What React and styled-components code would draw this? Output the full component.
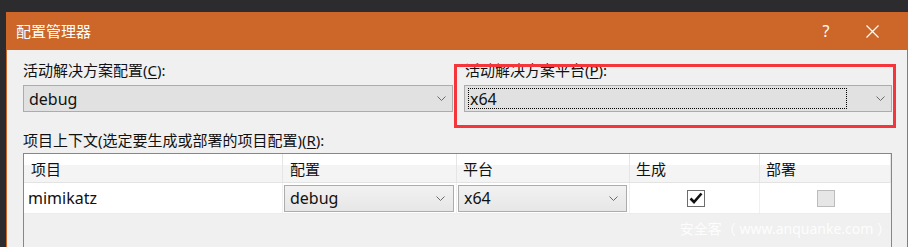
import React from 'react';
import styled, { createGlobalStyle } from 'styled-components';

const GlobalStyle = createGlobalStyle`
  html, body {
    margin: 0;
    padding: 0;
    background: #2c2c2e;
    overflow: hidden;
  }
  * {
    box-sizing: border-box;
  }
`;

const font = `"Noto Sans", "Noto Sans CJK SC", sans-serif`;

const Screen = styled.div`
  width: 908px;
  height: 247px;
  padding: 12px 0 0 6px;
  font-family: ${font};
`;

const Window = styled.div`
  width: 902px;
  height: 235px;
  border: 1px solid #cc6629;
  border-top: none;
  border-bottom: none;
  background: #f0f0f0;
  display: flex;
  flex-direction: column;
`;

const TitleBar = styled.div`
  height: 38px;
  background: #cc6629;
  color: #fff;
  display: flex;
  align-items: center;
  padding-left: 9px;
  font-size: 15px;
`;

const Title = styled.div`
  flex: 1;
  margin-top: -2px;
`;

const TitleButton = styled.div`
  width: ${p => p.$w}px;
  height: 38px;
  display: flex;
  align-items: center;
  justify-content: center;
  font-size: 16px;
`;

const Body = styled.div`
  flex: 1;
  padding: 10px 15px 0 16px;
  display: flex;
  flex-direction: column;
  position: relative;
`;

const TopGrid = styled.div`
  display: grid;
  grid-template-columns: 430px 428px;
  column-gap: 11px;
`;

const Field = styled.div`
  display: flex;
  flex-direction: column;
`;

const Label = styled.div`
  font-size: 15px;
  line-height: 20px;
  color: #111;
  height: 20px;
  margin-bottom: 5px;
  padding-left: ${p => p.$indent || 0}px;
  u {
    text-decoration: underline;
    text-underline-offset: 2px;
  }
`;

const Combo = styled.div`
  height: ${p => p.$h || 27}px;
  border: 1px solid #acacac;
  background: ${p => (p.$cell ? 'linear-gradient(#f2f2f2, #e6e6e6)' : '#e1e1e1')};
  display: flex;
  align-items: center;
  padding: 0 0 0 3px;
  font-size: 16px;
  color: #111;
  width: ${p => (p.$cell ? '100%' : 'auto')};
`;

const ComboText = styled.div`
  flex: 1;
  display: flex;
  align-items: center;
  padding-left: 1px;
  margin: 2px 0;
  height: calc(100% - 4px);
  border: 1px dotted ${p => (p.$focus ? '#000' : 'transparent')};
  margin-right: ${p => (p.$focus ? 23 : 0)}px;
`;

const Chevron = styled.svg`
  width: 9px;
  height: 5px;
  margin: 0 ${p => p.$right || 6}px 0 6px;
  flex-shrink: 0;
`;

const Annotation = styled.div`
  position: absolute;
  left: 447px;
  top: 14px;
  width: 442px;
  height: 64px;
  border: 3px solid #f4363b;
  pointer-events: none;
`;

const SectionLabel = styled(Label)`
  margin-top: 18px;
  margin-bottom: 3px;
`;

const Table = styled.div`
  flex: 1;
  width: 869px;
  border: 1px solid #828790;
  border-bottom: none;
  background: #f0f0f0;
  display: flex;
  flex-direction: column;
`;

const Row = styled.div`
  display: grid;
  grid-template-columns: 259px 174px 173px 130px 131px;
  height: ${p => p.$h}px;
  background: #fff;
  border-bottom: 1px solid ${p => (p.$header ? '#e3e3e3' : '#ececec')};
`;

const HeaderCell = styled.div`
  background: linear-gradient(#ffffff 0%, #ffffff 38%, #f4f4f5 38%, #f4f4f5 100%);
  border-right: 1px solid #e5e5e5;
  display: flex;
  align-items: center;
  padding-left: ${p => p.$pad || 7}px;
  font-size: 15px;
  color: #111;
`;

const Cell = styled.div`
  border-right: 1px solid #f0f0f0;
  display: flex;
  align-items: center;
  justify-content: ${p => (p.$center ? 'center' : 'flex-start')};
  padding-left: ${p => (p.$pad !== undefined ? p.$pad : 4)}px;
  padding-right: ${p => (p.$center ? 0 : 2)}px;
  font-size: 16px;
  color: #111;
`;

const Check = styled.div`
  width: 18px;
  height: 17px;
  border: 1px solid ${p => (p.$disabled ? '#bcbcbc' : '#6d6d6d')};
  background: ${p => (p.$disabled ? '#e6e6e6' : '#fff')};
  display: flex;
  align-items: center;
  justify-content: center;
  margin-left: ${p => p.$shift || 0}px;
`;

const Watermark = styled.div`
  position: absolute;
  right: 16px;
  bottom: 9px;
  color: rgba(255, 255, 255, 0.9);
  font-size: 14px;
  white-space: pre;
`;

const ChevronIcon = ({ right }) => (
  <Chevron viewBox="0 0 9 5" $right={right}>
    <path d="M0.5 0.5 L4.5 4.5 L8.5 0.5" fill="none" stroke="#6a6a6a" strokeWidth="1" />
  </Chevron>
);

const App = () => {
  return (
    <Screen>
      <GlobalStyle />
      <Window>
        <TitleBar>
          <Title>配置管理器</Title>
          <TitleButton $w={46}>?</TitleButton>
          <TitleButton $w={46}>
            <svg width="13" height="13" viewBox="0 0 13 13">
              <path d="M0.5 0.5 L12.5 12.5 M12.5 0.5 L0.5 12.5" stroke="#fff" strokeWidth="1.2" />
            </svg>
          </TitleButton>
          <div style={{ width: 12 }} />
        </TitleBar>
        <Body>
          <TopGrid>
            <Field>
              <Label>
                活动解决方案配置(<u>C</u>):
              </Label>
              <Combo>
                <ComboText>debug</ComboText>
                <ChevronIcon right={6} />
              </Combo>
            </Field>
            <Field>
              <Label $indent={1}>
                活动解决方案平台(<u>P</u>):
              </Label>
              <Combo>
                <ComboText $focus>x64</ComboText>
                <ChevronIcon right={6} />
              </Combo>
            </Field>
          </TopGrid>
          <Annotation />
          <SectionLabel>
            项目上下文(选定要生成或部署的项目配置)(<u>R</u>):
          </SectionLabel>
          <Table>
            <Row $h={29} $header>
              <HeaderCell $pad={7}>项目</HeaderCell>
              <HeaderCell $pad={7}>配置</HeaderCell>
              <HeaderCell $pad={6}>平台</HeaderCell>
              <HeaderCell $pad={6}>生成</HeaderCell>
              <HeaderCell $pad={6}>部署</HeaderCell>
            </Row>
            <Row $h={31}>
              <Cell $pad={4}>mimikatz</Cell>
              <Cell $pad={1}>
                <Combo $cell $h={27}>
                  <ComboText>debug</ComboText>
                  <ChevronIcon right={8} />
                </Combo>
              </Cell>
              <Cell $pad={1}>
                <Combo $cell $h={27}>
                  <ComboText>x64</ComboText>
                  <ChevronIcon right={8} />
                </Combo>
              </Cell>
              <Cell $center $pad={0}>
                <Check $shift={2}>
                  <svg width="14" height="12" viewBox="0 0 14 12">
                    <path d="M1.5 6.5 L5 10 L12.5 1.5" fill="none" stroke="#111" strokeWidth="2.6" />
                  </svg>
                </Check>
              </Cell>
              <Cell $center $pad={0}>
                <Check $disabled $shift={2} />
              </Cell>
            </Row>
          </Table>
          <Watermark>{'安全客（ www.anquanke.com ）'}</Watermark>
        </Body>
      </Window>
    </Screen>
  );
};

export default App;
